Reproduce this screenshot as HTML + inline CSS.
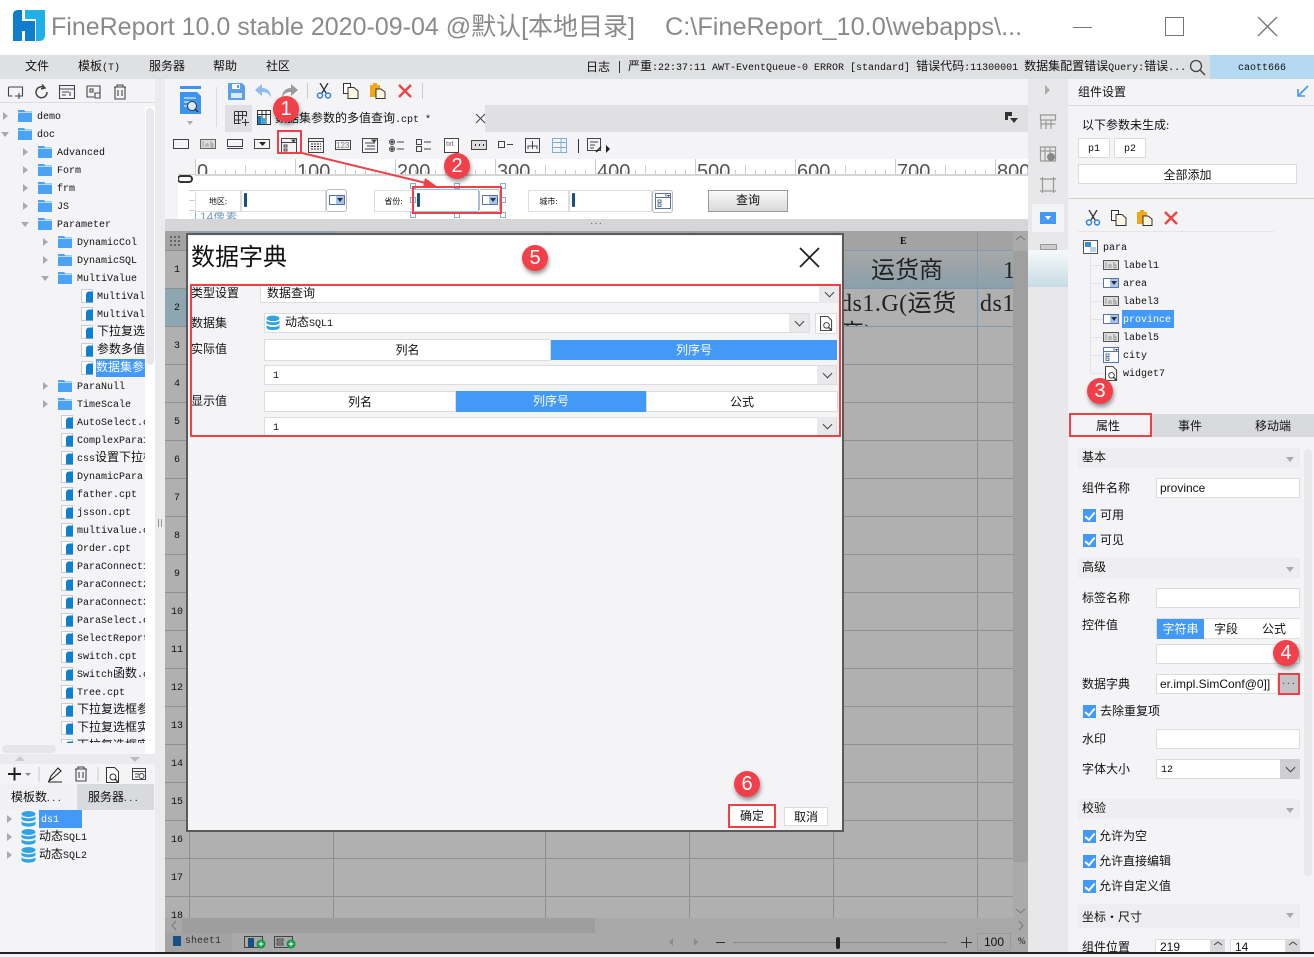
<!DOCTYPE html>
<html lang="zh"><head><meta charset="utf-8"><title>FineReport</title>
<style>
*{box-sizing:border-box}
html,body{margin:0;padding:0}
body{width:1314px;height:954px;position:relative;overflow:hidden;background:#f4f4f7;font:12px/19px "Liberation Serif","Noto Sans CJK SC",sans-serif;color:#111}
.a{position:absolute;white-space:nowrap}
.s{font-family:"Liberation Sans","Noto Sans CJK SC",sans-serif}
.m{font:10px/22px "Liberation Mono","Noto Sans CJK SC",monospace}
em{font:normal 12px/1 "Liberation Serif","Noto Sans CJK SC",sans-serif}
svg{position:absolute;overflow:visible}
.tree{position:absolute;left:0;top:107px;width:145px;height:636px;overflow:hidden;font:10px/22px "Liberation Mono","Noto Sans CJK SC",monospace}
.r{height:18px;position:relative;white-space:nowrap}
.r svg{top:2px}
.r b{font-weight:normal;position:absolute;top:0;height:18px;overflow:hidden}
.r u{position:absolute;top:5px;width:0;height:0;border-left:5px solid #aaa;border-top:4px solid transparent;border-bottom:4px solid transparent}
.r u.o{border-left:4px solid transparent;border-right:4px solid transparent;border-top:5px solid #aaa;border-bottom:0;top:7px;margin-left:-2px}
.f{position:absolute;background:#fff;border:1px solid #dcdcdc;line-height:18px;padding-left:4px;white-space:nowrap;overflow:hidden}
.ar{position:absolute;background:#e9e9ec}
.ar:after{content:"";position:absolute;left:50%;top:50%;width:6px;height:6px;margin:-5px 0 0 -3px;border-right:1.3px solid #444;border-bottom:1.3px solid #444;transform:rotate(45deg)}
.sec{position:absolute;left:1078px;width:222px;height:20px;background:#eeeef0;padding-left:4px;line-height:19px}
.sec:after{content:"";position:absolute;right:6px;top:9px;border-left:4px solid transparent;border-right:4px solid transparent;border-top:5px solid #aaa}
.ck{position:absolute;left:1083px;width:13px;height:13px;background:#4299f7}
.ck:after{content:"";position:absolute;left:4px;top:1px;width:4px;height:8px;border-right:2px solid #fff;border-bottom:2px solid #fff;transform:rotate(40deg)}
.n{position:absolute;width:26px;height:26px;border-radius:50%;background:#f2404a;color:#fff;font:20px/26px "Liberation Sans",sans-serif;text-align:center;box-shadow:1px 3px 4px rgba(0,0,0,.4);z-index:9}
.red{position:absolute;border:2px solid #ef4048;z-index:8}
.rl{position:absolute;top:159px;height:16px;width:60px;overflow:hidden;font:20px/26px "Liberation Sans",sans-serif;color:#555}
.hn{position:absolute;left:165px;width:24px;text-align:center;font:10px/22px "Liberation Mono",monospace}
.seg{position:absolute;text-align:center;line-height:20px}
</style></head><body>
<svg width="0" height="0" style="position:absolute"><defs>
<symbol id="fo" viewBox="0 0 14 14"><path d="M0 1h6l1.500 1.500H14V13H0z" fill="#4aa3f5"/><path d="M0 3.500h14" stroke="#fff" stroke-width=".6"/></symbol>
<symbol id="fi" viewBox="0 0 12 14"><path d="M.5.500h11v13H.5z" fill="#fff" stroke="#ccc"/><path d="M5 5.500a3 3 0 0 1 3-3h4v11H5z" fill="#0d80d0"/></symbol>
<symbol id="db" viewBox="0 0 15 16"><ellipse cx="7.500" cy="3" rx="7" ry="3" fill="#2fa4e4"/><path d="M.5 5c1 3 13 3 14 0v3c-1 3-13 3-14 0zM.5 10c1 3 13 3 14 0v3c-1 3.500-13 3.500-14 0z" fill="#2fa4e4"/></symbol>
<symbol id="lab" viewBox="0 0 16 10"><rect x=".5" y=".5" width="15" height="9" fill="#ddd" stroke="#555"/><path d="M3 2v6M6 8V5h2v3M11 2v6h2V5h-2" stroke="#999" fill="none"/></symbol>
<symbol id="cb" viewBox="0 0 16 10"><rect x=".5" y=".5" width="15" height="9" fill="#fff" stroke="#5a74a6"/><rect x="7" y="1" width="8" height="8" fill="#a9c4ea"/><path d="M8 3h6l-3 4z" fill="#234"/></symbol>
<symbol id="wg" viewBox="0 0 16 16"><rect x=".5" y=".5" width="15" height="15" fill="#fff" stroke="#5a74a6"/><path d="M.5 4.500h15M11 1v3.500" stroke="#5a74a6" fill="none"/><path d="M12 2h3l-1.500 2z" fill="#234"/><path d="M3 7h3v2.500H3zM3 11h3v2.500H3z" fill="none" stroke="#5a74a6"/></symbol>
<symbol id="cut" viewBox="0 0 16 16"><path d="M4 0l6 10M12 0L6 10" stroke="#333" stroke-width="1.300" fill="none"/><circle cx="4" cy="12.500" r="2.500" fill="none" stroke="#2e82d6" stroke-width="1.500"/><circle cx="12" cy="12.500" r="2.500" fill="none" stroke="#2e82d6" stroke-width="1.500"/></symbol>
<symbol id="cp" viewBox="0 0 16 16"><path d="M.5.500h7v10h-7z" fill="#fff" stroke="#333"/><path d="M5 4.500h6l4 3.500v7.500H5z" fill="#fdf6e0" stroke="#333"/></symbol>
<symbol id="pa" viewBox="0 0 16 16"><path d="M0 2h10v12H0z" fill="#f0a818"/><path d="M3 0h4v3H3z" fill="#f0a818"/><path d="M6 6h5l4 3v6.500H6z" fill="#fdf6e0" stroke="#333"/></symbol>
<symbol id="del" viewBox="0 0 14 14"><path d="M1 1l12 12M13 1L1 13" stroke="#ee4245" stroke-width="2.400"/></symbol>
<symbol id="qs" viewBox="0 0 14 16"><path d="M.5.500h8l4 4v11H.5z" fill="#fff" stroke="#333"/><circle cx="7" cy="10" r="3" fill="#fff" stroke="#333"/><path d="M9 12l3 3" stroke="#333" stroke-width="1.400"/></symbol>
</defs></svg>

<!-- title bar -->
<div class="a" style="left:0;top:0;width:1314px;height:55px;background:#fff"></div>
<svg style="left:13px;top:10px" width="32" height="32" viewBox="0 0 32 32"><path d="M0 5Q0 0 5 0H9V11H22V31H12V21H9V31H0Z" fill="#0d7dcc"/><path d="M12 0H32V25Q32 31 26 31H23V9H12Z" fill="#1fb0e8"/></svg>
<div class="a s" style="left:51px;top:10px;font-size:25px;line-height:34px;color:#8a8a8a">FineReport 10.0 stable 2020-09-04 @默认[本地目录]</div>
<div class="a s" style="left:665px;top:10px;font-size:25.300px;line-height:34px;color:#8a8a8a">C:\FineReport_10.0\webapps\...</div>
<div class="a" style="left:1073px;top:27px;width:19px;height:1px;background:#777"></div>
<div class="a" style="left:1165px;top:17px;width:19px;height:19px;border:1.500px solid #777"></div>
<svg style="left:1258px;top:17px" width="19" height="19"><path d="M0 0l19 19M19 0L0 19" stroke="#777" stroke-width="1.400"/></svg>

<!-- menu bar -->
<div class="a" style="left:0;top:55px;width:1314px;height:24px;background:#dfe0e2"></div>
<div class="a" style="left:25px;top:57px;">文件</div>
<div class="a m" style="left:78px;top:58px;"><em>模板</em>(T)</div>
<div class="a" style="left:149px;top:57px;">服务器</div>
<div class="a" style="left:213px;top:57px;">帮助</div>
<div class="a" style="left:266px;top:57px;">社区</div>
<div class="a" style="left:586px;top:58px;">日志</div>
<div class="a" style="left:619px;top:61px;width:1px;height:12px;background:#333"></div>
<div class="a m" style="left:628px;top:58px;width:558px;overflow:hidden"><em>严重</em>:22:37:11 AWT-EventQueue-0 ERROR [standard] <em>错误代码</em>:11300001 <em>数据集配置错误</em>Query:<em>错误</em>...</div>
<svg style="left:1189px;top:59px" width="17" height="17"><circle cx="7" cy="7" r="5.500" fill="none" stroke="#444" stroke-width="1.300"/><path d="M11 11l5 5" stroke="#444" stroke-width="1.500"/></svg>
<div class="a m" style="left:1210px;top:55px;width:104px;height:24px;background:#b5d9f0;text-align:center;line-height:28px">caott666</div>

<!-- left panel -->
<div class="a" style="left:0;top:79px;width:155px;height:875px;background:#f4f4f7"></div>
<div class="a" style="left:0;top:102px;width:155px;height:1px;background:#dedee0"></div>
<svg style="left:8px;top:84px" width="125" height="16" fill="none" stroke="#444" stroke-width="1.100"><path d="M.5 3h14v9H7M.5 3v9h4M11 9v6M8 12h6"/><path d="M37 4a5.500 5.500 0 1 0 2 4M34 .5l3 3.500-4 1" stroke-width="1.500"/><path d="M51.500 1.500h15v13h-15zM51.500 5h15M54 8h7M54 11h4M62 8v4"/><path d="M79 2h13v7M79 2v11h7M82 5h3v3h-3zM87 9h5v5h-5z"/><path d="M106 3h12M109 3V1h6v2M107 3v12h10V3M110 6v6M114 6v6"/></svg>
<div class="a" style="left:156px;top:85px;width:0;height:0;border-right:5px solid #bbb;border-top:5px solid transparent;border-bottom:5px solid transparent"></div>
<div class="a" style="left:145px;top:107px;width:10px;height:647px;background:#fff"></div>
<div class="a" style="left:146px;top:108px;width:8px;height:257px;border-radius:4px;background:#e9e9eb"></div>
<div class="a" style="left:155px;top:79px;width:10px;height:875px;background:#ebebed"></div>
<div class="a" style="left:158px;top:519px;width:4px;height:8px;border-left:1px solid #999;border-right:1px solid #999"></div>

<div class="tree">
<div class="r"><u style="left:3px"></u><svg style="left:18px" width="14" height="14"><use href="#fo"/></svg><b style="left:37px">demo</b></div>
<div class="r"><u class="o" style="left:3px"></u><svg style="left:18px" width="14" height="14"><use href="#fo"/></svg><b style="left:37px">doc</b></div>
<div class="r"><u style="left:23px"></u><svg style="left:38px" width="14" height="14"><use href="#fo"/></svg><b style="left:57px">Advanced</b></div>
<div class="r"><u style="left:23px"></u><svg style="left:38px" width="14" height="14"><use href="#fo"/></svg><b style="left:57px">Form</b></div>
<div class="r"><u style="left:23px"></u><svg style="left:38px" width="14" height="14"><use href="#fo"/></svg><b style="left:57px">frm</b></div>
<div class="r"><u style="left:23px"></u><svg style="left:38px" width="14" height="14"><use href="#fo"/></svg><b style="left:57px">JS</b></div>
<div class="r"><u class="o" style="left:23px"></u><svg style="left:38px" width="14" height="14"><use href="#fo"/></svg><b style="left:57px">Parameter</b></div>
<div class="r"><u style="left:43px"></u><svg style="left:58px" width="14" height="14"><use href="#fo"/></svg><b style="left:77px">DynamicCol</b></div>
<div class="r"><u style="left:43px"></u><svg style="left:58px" width="14" height="14"><use href="#fo"/></svg><b style="left:77px">DynamicSQL</b></div>
<div class="r"><u class="o" style="left:43px"></u><svg style="left:58px" width="14" height="14"><use href="#fo"/></svg><b style="left:77px">MultiValue</b></div>
<div class="r"><svg style="left:81px" width="12" height="14"><use href="#fi"/></svg><b style="left:97px">MultiValue1</b></div>
<div class="r"><svg style="left:81px" width="12" height="14"><use href="#fi"/></svg><b style="left:97px">MultiValue2</b></div>
<div class="r"><svg style="left:81px" width="12" height="14"><use href="#fi"/></svg><b style="left:97px"><em>下拉复选框</em></b></div>
<div class="r"><svg style="left:81px" width="12" height="14"><use href="#fi"/></svg><b style="left:97px"><em>参数多值查</em></b></div>
<div class="r"><svg style="left:81px" width="12" height="14"><use href="#fi"/></svg><b style="left:96px;width:49px;background:#4299f7;color:#fff;overflow:hidden"><em>数据集参数</em></b></div>
<div class="r"><u style="left:43px"></u><svg style="left:58px" width="14" height="14"><use href="#fo"/></svg><b style="left:77px">ParaNull</b></div>
<div class="r"><u style="left:43px"></u><svg style="left:58px" width="14" height="14"><use href="#fo"/></svg><b style="left:77px">TimeScale</b></div>
<div class="r"><svg style="left:61px" width="12" height="14"><use href="#fi"/></svg><b style="left:77px">AutoSelect.cpt</b></div>
<div class="r"><svg style="left:61px" width="12" height="14"><use href="#fi"/></svg><b style="left:77px">ComplexPara1.cpt</b></div>
<div class="r"><svg style="left:61px" width="12" height="14"><use href="#fi"/></svg><b style="left:77px">css<em>设置下拉框</em></b></div>
<div class="r"><svg style="left:61px" width="12" height="14"><use href="#fi"/></svg><b style="left:77px">DynamicPara.cpt</b></div>
<div class="r"><svg style="left:61px" width="12" height="14"><use href="#fi"/></svg><b style="left:77px">father.cpt</b></div>
<div class="r"><svg style="left:61px" width="12" height="14"><use href="#fi"/></svg><b style="left:77px">jsson.cpt</b></div>
<div class="r"><svg style="left:61px" width="12" height="14"><use href="#fi"/></svg><b style="left:77px">multivalue.cpt</b></div>
<div class="r"><svg style="left:61px" width="12" height="14"><use href="#fi"/></svg><b style="left:77px">Order.cpt</b></div>
<div class="r"><svg style="left:61px" width="12" height="14"><use href="#fi"/></svg><b style="left:77px">ParaConnect1.cpt</b></div>
<div class="r"><svg style="left:61px" width="12" height="14"><use href="#fi"/></svg><b style="left:77px">ParaConnect2.cpt</b></div>
<div class="r"><svg style="left:61px" width="12" height="14"><use href="#fi"/></svg><b style="left:77px">ParaConnect3.cpt</b></div>
<div class="r"><svg style="left:61px" width="12" height="14"><use href="#fi"/></svg><b style="left:77px">ParaSelect.cpt</b></div>
<div class="r"><svg style="left:61px" width="12" height="14"><use href="#fi"/></svg><b style="left:77px">SelectReport.cpt</b></div>
<div class="r"><svg style="left:61px" width="12" height="14"><use href="#fi"/></svg><b style="left:77px">switch.cpt</b></div>
<div class="r"><svg style="left:61px" width="12" height="14"><use href="#fi"/></svg><b style="left:77px">Switch<em>函数</em>.cpt</b></div>
<div class="r"><svg style="left:61px" width="12" height="14"><use href="#fi"/></svg><b style="left:77px">Tree.cpt</b></div>
<div class="r"><svg style="left:61px" width="12" height="14"><use href="#fi"/></svg><b style="left:77px"><em>下拉复选框参数</em></b></div>
<div class="r"><svg style="left:61px" width="12" height="14"><use href="#fi"/></svg><b style="left:77px"><em>下拉复选框实际</em></b></div>
<div class="r"><svg style="left:61px" width="12" height="14"><use href="#fi"/></svg><b style="left:77px"><em>下拉复选框实</em></b></div>
</div>
<div class="a" style="left:2px;top:745px;width:54px;height:8px;border-radius:4px;background:#e6e6e8"></div>
<div class="a" style="left:0;top:754px;width:155px;height:10px;background:#ebebed"></div>
<div class="a" style="left:15px;top:756px;border-left:5px solid transparent;border-right:5px solid transparent;border-bottom:5px solid #ccc"></div>
<div class="a" style="left:130px;top:757px;border-left:5px solid transparent;border-right:5px solid transparent;border-top:5px solid #bbb"></div>
<svg style="left:8px;top:766px" width="140" height="17" fill="none" stroke="#444" stroke-width="1.100"><path d="M0 8h13M6.500 1.500v13" stroke="#222" stroke-width="2"/><path d="M17 7h6l-3 3z" fill="#888" stroke="none"/><path d="M31 1v15M90 1v15" stroke="#ccc"/><path d="M41 15l2-5 7-8 3 3-8 7zM40 16h14" stroke="#222"/><path d="M67 3h12M70 3V1h6v2M68 3v12h10V3M71 6v6M75 6v6"/></svg>
<svg style="left:106px;top:767px" width="14" height="16"><use href="#qs"/></svg>
<svg style="left:132px;top:767px" width="14" height="14" fill="none" stroke="#444"><path d="M.5 1.500h13v11H.5zM.5 4.500h13M3 7h4M3 10h3"/><circle cx="9.500" cy="9" r="2.500"/></svg>
<div class="a" style="left:0;top:784px;width:77px;height:26px;background:#f1f1f3;line-height:26px;padding-left:11px">模板数<span style="font-size:10px;letter-spacing:3px">...</span></div>
<div class="a" style="left:77px;top:784px;width:77px;height:26px;background:#d9dade;line-height:26px;padding-left:11px">服务器<span style="font-size:10px;letter-spacing:3px">...</span></div>
<div class="a" style="left:7px;top:815px;border-left:5px solid #aaa;border-top:4px solid transparent;border-bottom:4px solid transparent"></div>
<div class="a" style="left:7px;top:833px;border-left:5px solid #aaa;border-top:4px solid transparent;border-bottom:4px solid transparent"></div>
<div class="a" style="left:7px;top:851px;border-left:5px solid #aaa;border-top:4px solid transparent;border-bottom:4px solid transparent"></div>
<svg style="left:21px;top:811px" width="15" height="16"><use href="#db"/></svg>
<svg style="left:21px;top:829px" width="15" height="16"><use href="#db"/></svg>
<svg style="left:21px;top:847px" width="15" height="16"><use href="#db"/></svg>
<div class="a m" style="left:39px;top:810px;width:43px;height:18px;background:#4299f7;color:#fff;padding-left:2px">ds1</div>
<div class="a m" style="left:39px;top:828px"><em>动态</em>SQL1</div>
<div class="a m" style="left:39px;top:846px"><em>动态</em>SQL2</div>

<!-- center top -->
<div class="a" style="left:165px;top:79px;width:863px;height:80px;background:#f4f4f7"></div>
<svg style="left:180px;top:86px" width="21" height="28"><rect x="0" y="0" width="21" height="3" fill="#3a94f0"/><path d="M0 6h17l4 4v18H0z" fill="#3a94f0"/><path d="M4 12h12M4 16h6M4 20h5" stroke="#fff"/><circle cx="12" cy="20" r="4.500" fill="#dbeafb" stroke="#334"/><path d="M15 23l3 3" stroke="#333" stroke-width="1.500"/></svg>
<div class="a" style="left:187px;top:121px;border-left:3px solid transparent;border-right:3px solid transparent;border-top:4px solid #aaa"></div>
<div class="a" style="left:216px;top:87px;width:1px;height:40px;background:#ddd"></div>
<svg style="left:228px;top:83px" width="17" height="17"><path d="M1 0h13l3 3v13a1 1 0 0 1-1 1H1a1 1 0 0 1-1-1V1a1 1 0 0 1 1-1z" fill="#5a9fe8"/><rect x="4" y="1" width="8" height="5" fill="#fff"/><rect x="9" y="2" width="2" height="3" fill="#5a9fe8"/><rect x="3" y="10" width="11" height="5" fill="#dbeafb"/></svg>
<svg style="left:255px;top:84px" width="17" height="15"><path d="M7 0L0 6l7 6V8c4 0 7 1 9 6 0-6-3-10-9-10z" fill="#8dbdf0"/></svg>
<svg style="left:281px;top:84px" width="17" height="15"><path d="M10 0l7 6-7 6V8C6 8 3 9 1 14c0-6 3-10 9-10z" fill="#9a9a9a"/></svg>
<div class="a" style="left:307px;top:83px;width:1px;height:16px;background:#ccc"></div>
<svg style="left:316px;top:83px" width="16" height="16"><use href="#cut"/></svg>
<svg style="left:343px;top:83px" width="16" height="16"><use href="#cp"/></svg>
<svg style="left:370px;top:83px" width="16" height="16"><use href="#pa"/></svg>
<svg style="left:398px;top:84px" width="14" height="14"><use href="#del"/></svg>
<div class="a" style="left:422px;top:83px;width:1px;height:16px;background:#ccc"></div>

<div class="a" style="left:225px;top:105px;width:803px;height:27px;background:#e0e0e2"></div>
<div class="a" style="left:252px;top:105px;width:233px;height:27px;background:#f4f4f7"></div>
<svg style="left:234px;top:111px" width="15" height="15" fill="none" stroke="#333"><path d="M.5.500h12M.5 4.500h12M.5 9h7M.5.500v12h6M4.500.500v12M8.500.500v8M12.500.500v5M11.500 8v7M8 11.500h7"/></svg>
<svg style="left:257px;top:110px" width="14" height="15"><path d="M.5.500h13v14H.5zM.5 4.500h13M5 .500v14M9 .500v14" fill="#fff" stroke="#333"/><rect x="1" y="6" width="3" height="8" fill="#0d80d0"/><rect x="5" y="8" width="3" height="6" fill="#1fb0e8"/></svg>
<div class="a m" style="left:275px;top:110px"><em>数据集参数的多值查询</em>.cpt *</div>
<svg style="left:476px;top:114px" width="9" height="9"><path d="M0 0l9 9M9 0L0 9" stroke="#444"/></svg>
<svg style="left:1005px;top:112px" width="13" height="11"><path d="M0 0h7v4H3v4H0z" fill="#333"/><path d="M5 6h8l-4 5z" fill="#333"/></svg>

<!-- widget row -->
<svg style="left:173px;top:138px" width="440" height="16" fill="none" stroke="#444">
<rect x=".5" y="1.500" width="15" height="9" />
<g transform="translate(27 1)"><rect x=".5" y=".5" width="15" height="9" fill="#ddd" stroke="#666"/><path d="M3 2v6M6 8V5h2v3M11 2v6h2V5h-2" stroke="#999"/></g>
<rect x="54.500" y="1.500" width="15" height="7"/><path d="M54 10.500h16"/>
<rect x="81.500" y="1.500" width="15" height="9"/><path d="M86 4h7l-3.500 4z" fill="#222" stroke="none"/>
<g transform="translate(108 0)"><path d="M.5.500h15v14H.5zM.5 4.500h15"/><path d="M11 2h3l-1.500 2z" fill="#222"/><path d="M3 7h3v2H3zM3 11h3v2H3z"/></g>
<g transform="translate(135 0)"><path d="M.5.500h15v14H.5zM.5 3.500h15"/><path d="M3 6h10M3 8.500h10M3 11h10" stroke-dasharray="2 1" stroke="#222"/></g>
<g transform="translate(162 2)"><rect x=".5" y=".5" width="15" height="9"/><text x="1" y="8" font-size="8" font-family="Liberation Sans" fill="#777" stroke="none">123</text></g>
<g transform="translate(189 0)"><path d="M.5.500h15v14H.5zM3 5h10M5 8h8M3 11h10"/><path d="M10 2h4l-2 2z" fill="#222"/></g>
<g transform="translate(216 1)"><circle cx="3" cy="3" r="2.500"/><circle cx="3" cy="3" r="1" fill="#333"/><circle cx="3" cy="10" r="2.500"/><circle cx="3" cy="10" r="1" fill="#333"/><path d="M8 3h7M8 10h7"/></g>
<g transform="translate(243 1)"><path d="M.5.500h5v5h-5zM.5 7.500h5v5h-5zM8 3h7M8 10h7"/></g>
<g transform="translate(271 0)"><rect x=".5" y=".5" width="14" height="14" fill="#fff"/><text x="2" y="8" font-size="7" font-family="Liberation Sans" fill="#555" stroke="none">txt</text></g>
<g transform="translate(298 2)"><rect x=".5" y=".5" width="15" height="9" fill="#ddd"/><path d="M4 5h1M8 5h1M12 5h1" stroke="#222" stroke-width="2"/></g>
<g transform="translate(325 1)"><path d="M.5 2.500h6v6h-6zM9 5.500h6"/></g>
<g transform="translate(352 0)"><rect x=".5" y=".5" width="14" height="14"/><path d="M7.500 3v3M3 11V8h9v3M7.500 6v5" /></g>
<g transform="translate(379 0)" stroke="#7ab0dc"><path d="M.5.500h14v14H.5zM.5 4.500h14M9 .5v14M.5 9.500h14"/></g>
<path d="M405.500 1v14" stroke="#333"/>
<g transform="translate(414 0)"><path d="M.5.500h13v12H.5zM3 4h8M3 7h5M3 10h4"/><path d="M9 14l5-5" stroke="#222" stroke-width="1.500"/></g>
<path d="M433 7l4 4-4 4z" fill="#222" stroke="none"/>
</svg>

<!-- ruler -->
<div class="a" style="left:195px;top:159px;width:833px;height:16px;background:#fff"></div>
<svg style="left:195px;top:159px" width="833" height="17"><g stroke="#ccc"><path d="M.5 0v16M100.500 0v16M200.500 0v16M300.500 0v16M400.500 0v16M500.500 0v16M600.500 0v16M700.500 0v16M800.500 0v16M50.500 6v10M150.500 6v10M250.500 6v10M350.500 6v10M450.500 6v10M550.500 6v10M650.500 6v10M750.500 6v10M10.500 11v5M20.500 11v5M30.500 11v5M40.500 11v5M60.500 11v5M70.500 11v5M80.500 11v5M90.500 11v5M110.500 11v5M120.500 11v5M130.500 11v5M140.500 11v5M160.500 11v5M170.500 11v5M180.500 11v5M190.500 11v5M210.500 11v5M220.500 11v5M230.500 11v5M240.500 11v5M260.500 11v5M270.500 11v5M280.500 11v5M290.500 11v5M310.500 11v5M320.500 11v5M330.500 11v5M340.500 11v5M360.500 11v5M370.500 11v5M380.500 11v5M390.500 11v5M410.500 11v5M420.500 11v5M430.500 11v5M440.500 11v5M460.500 11v5M470.500 11v5M480.500 11v5M490.500 11v5M510.500 11v5M520.500 11v5M530.500 11v5M540.500 11v5M560.500 11v5M570.500 11v5M580.500 11v5M590.500 11v5M610.500 11v5M620.500 11v5M630.500 11v5M640.500 11v5M660.500 11v5M670.500 11v5M680.500 11v5M690.500 11v5M710.500 11v5M720.500 11v5M730.500 11v5M740.500 11v5M760.500 11v5M770.500 11v5M780.500 11v5M790.500 11v5M810.500 11v5M820.500 11v5"/></g></svg>
<div class="rl" style="left:197px;overflow:hidden">0</div><div class="rl" style="left:297px">100</div><div class="rl" style="left:397px">200</div><div class="rl" style="left:497px">300</div><div class="rl" style="left:597px">400</div><div class="rl" style="left:697px">500</div><div class="rl" style="left:797px">600</div><div class="rl" style="left:897px">700</div><div class="rl" style="left:997px;width:31px">800</div>
<div class="a" style="left:195px;top:174px;width:833px;height:2px;background:#d6d6d8"></div>
<div class="a" style="left:178px;top:175px;width:17px;height:44px;background:#fff"></div>
<div class="a" style="left:178px;top:174px;width:17px;height:1px;background:#ccc"></div>
<div class="a" style="left:177px;top:175px;width:16px;height:8px;border:2px solid #333;border-radius:4px"></div>
<div class="a" style="left:189px;top:190px;width:6px;height:1px;background:#ccc;box-shadow:0 10px 0 #ccc,0 20px 0 #ccc"></div>

<!-- parameter pane -->
<div class="a" style="left:195px;top:176px;width:833px;height:43px;background:#fff"></div>
<div class="a" style="left:195px;top:190px;width:46px;height:22px;border:1px solid #ddd;text-align:center;font-size:8px;line-height:22px">地区:</div>
<div class="a" style="left:241px;top:190px;width:85px;height:22px;border:1px solid #ddd;background:#fff"></div>
<div class="a" style="left:244px;top:193px;width:3px;height:14px;background:#174f86;border-radius:1px"></div>
<div class="a" style="left:326px;top:189px;width:21px;height:23px;border:1px solid #bbb;border-radius:3px"></div>
<svg style="left:329px;top:195px" width="16" height="10"><use href="#cb"/></svg>
<div class="a" style="left:374px;top:190px;width:39px;height:22px;border:1px solid #ddd;text-align:center;font-size:8px;line-height:22px">省份:</div>
<div class="a" style="left:413px;top:189px;width:66px;height:23px;border:1px solid #8fc0ef"></div>
<div class="a" style="left:417px;top:193px;width:3px;height:14px;background:#174f86;border-radius:1px"></div>
<div class="a" style="left:479px;top:189px;width:21px;height:23px;border:1px solid #bbb;border-radius:3px"></div>
<svg style="left:482px;top:195px" width="16" height="10"><use href="#cb"/></svg>
<svg style="left:410px;top:183px" width="96" height="36" fill="#fff" stroke="#8caecf"><rect x=".5" y=".5" width="5" height="5"/><rect x="44.500" y=".5" width="5" height="5"/><rect x="90.500" y=".5" width="5" height="5"/><rect x=".5" y="14.500" width="5" height="5"/><rect x="90.500" y="14.500" width="5" height="5"/><rect x=".5" y="29.500" width="5" height="5"/><rect x="44.500" y="29.500" width="5" height="5"/><rect x="90.500" y="29.500" width="5" height="5"/></svg>
<div class="a" style="left:528px;top:190px;width:41px;height:22px;border:1px solid #ddd;text-align:center;font-size:8px;line-height:22px">城市:</div>
<div class="a" style="left:569px;top:190px;width:83px;height:22px;border:1px solid #ddd"></div>
<div class="a" style="left:572px;top:193px;width:3px;height:14px;background:#174f86;border-radius:1px"></div>
<div class="a" style="left:652px;top:190px;width:21px;height:23px;border:1px solid #bbb;border-radius:3px"></div>
<svg style="left:655px;top:193px" width="16" height="16"><use href="#wg"/></svg>
<div class="a" style="left:708px;top:190px;width:80px;height:22px;border:1px solid #999;background:linear-gradient(#fafafa,#d8d8d8);text-align:center;line-height:19px">查询</div>
<div class="a" style="left:195px;top:212px;width:60px;height:7px;overflow:hidden;font-size:12px;line-height:11px;color:#7a9ec0;border-left:1px solid #9ab;padding-left:4px;font-family:'Liberation Sans','Noto Sans CJK SC',sans-serif">14像素</div>
<div class="a" style="left:165px;top:219px;width:863px;height:12px;background:#d6d6d8;text-align:center;line-height:12px;letter-spacing:1px;font-size:10px;color:#666">···</div>
<div class="a" style="left:165px;top:159px;width:13px;height:60px;background:#f4f4f7"></div>

<!-- grid -->
<svg style="left:165px;top:231px" width="848" height="687">
<rect width="848" height="687" fill="#b0b0b0"/>
<rect width="848" height="19" fill="#a3a3a3"/>
<rect x="24" width="144" height="3" fill="#8fa5ae"/>
<rect y="57" width="24" height="38" fill="#8ea6b0"/>
<defs><linearGradient id="gh" x1="0" y1="0" x2="0" y2="1"><stop offset="0" stop-color="#a8a8a8"/><stop offset="1" stop-color="#8aa0aa"/></linearGradient></defs>
<rect x="668" y="19" width="180" height="38" fill="url(#gh)"/>
<g stroke="#8f8f8f"><path d="M0 19.500h848M0 57.500h848M0 95.500h848M0 133.500h848M0 171.500h848M0 209.500h848M0 247.500h848M0 285.500h848M0 323.500h848M0 361.500h848M0 399.500h848M0 437.500h848M0 475.500h848M0 513.500h848M0 551.500h848M0 589.500h848M0 627.500h848M0 665.500h848M24.500 0v687M168.500 0v687M380.500 0v687M524.500 0v687M668.500 0v687M812.500 0v687"/></g>
<path d="M668.500 19v76M812.500 19v76M668 19.500h180M668 57.500h180M668 95.500h180" stroke="#7f9ab0"/>
</svg>
<svg style="left:170px;top:236px" width="11" height="11" fill="#666"><path d="M0 0h2v2H0zM4 0h2v2H4zM8 0h2v2H8zM0 4h2v2H0zM4 4h2v2H4zM8 4h2v2H8zM0 8h2v2H0zM4 8h2v2H4zM8 8h2v2H8z"/></svg>
<div class="hn" style="top:260px">1</div><div class="hn" style="top:298px">2</div><div class="hn" style="top:336px">3</div><div class="hn" style="top:374px">4</div><div class="hn" style="top:412px">5</div><div class="hn" style="top:450px">6</div><div class="hn" style="top:488px">7</div><div class="hn" style="top:526px">8</div><div class="hn" style="top:564px">9</div><div class="hn" style="top:602px">10</div><div class="hn" style="top:640px">11</div><div class="hn" style="top:678px">12</div><div class="hn" style="top:716px">13</div><div class="hn" style="top:754px">14</div><div class="hn" style="top:792px">15</div><div class="hn" style="top:830px">16</div><div class="hn" style="top:868px">17</div>
<div class="hn" style="top:906px;height:12px;overflow:hidden">18</div>
<div class="a" style="left:900px;top:233px;font-weight:bold;font-size:10px;line-height:18px">E</div>
<div class="a" style="left:871px;top:254px;font-size:24px;line-height:34px;color:#222">运货商</div>
<div class="a" style="left:1003px;top:254px;width:10px;height:34px;overflow:hidden;font-size:24px;line-height:34px;color:#222">1</div>
<div class="a" style="left:840px;top:289px;width:130px;height:37px;overflow:hidden;font-size:24px;line-height:30px;color:#222;letter-spacing:.5px">ds1.G(运货<br>商)</div>
<div class="a" style="left:980px;top:289px;width:33px;height:37px;overflow:hidden;font-size:24px;line-height:30px;color:#222;letter-spacing:.5px">ds1</div>

<!-- scrollbars -->
<div class="a" style="left:1013px;top:231px;width:15px;height:687px;background:#aaa"></div>
<div class="a" style="left:1013px;top:251px;width:15px;height:611px;background:#9f9f9f"></div>
<svg style="left:1016px;top:235px" width="9" height="6"><path d="M0 5l4.500-4L9 5" fill="none" stroke="#777"/></svg>
<svg style="left:1016px;top:908px" width="9" height="6"><path d="M0 1l4.500 4L9 1" fill="none" stroke="#777"/></svg>
<div class="a" style="left:165px;top:918px;width:863px;height:15px;background:#a8a8a8"></div>
<div class="a" style="left:182px;top:918px;width:413px;height:15px;background:#9e9e9e"></div>
<svg style="left:171px;top:921px" width="6" height="9"><path d="M5 0L1 4.500 5 9" fill="none" stroke="#777"/></svg>
<svg style="left:1018px;top:921px" width="6" height="9"><path d="M1 0l4 4.500L1 9" fill="none" stroke="#777"/></svg>

<!-- sheet bar -->
<div class="a" style="left:165px;top:933px;width:863px;height:19px;background:#a9a9a9"></div>
<div class="a" style="left:165px;top:933px;width:67px;height:19px;background:#a3a3a3"></div>
<div class="a" style="left:173px;top:936px;width:8px;height:10px;background:#174f86"></div>
<div class="a m" style="left:185px;top:931px;color:#333">sheet1</div>
<svg style="left:244px;top:935px" width="56" height="14" fill="none" stroke="#444"><rect x=".5" y="1.500" width="18" height="11"/><rect x="4" y="3" width="6" height="9" fill="#174f86" stroke="none"/><circle cx="17" cy="9" r="4.500" fill="#129a46" stroke="none"/><path d="M14.500 9h5M17 6.500v5" stroke="#fff"/><rect x="30.500" y="1.500" width="18" height="11"/><path d="M33 4h6v2h-6zM33 8h6v2h-6z"/><circle cx="47" cy="9" r="4.500" fill="#129a46" stroke="none"/><path d="M44.500 9h5M47 6.500v5" stroke="#fff"/></svg>
<div class="a" style="left:669px;top:938px;border-right:4px solid #8a8a8a;border-top:4px solid transparent;border-bottom:4px solid transparent"></div>
<div class="a" style="left:694px;top:938px;border-left:4px solid #8a8a8a;border-top:4px solid transparent;border-bottom:4px solid transparent"></div>
<div class="a" style="left:716px;top:942px;width:9px;height:1px;background:#333"></div>
<div class="a" style="left:733px;top:942px;width:214px;height:1px;background:#8a8a8a"></div>
<div class="a" style="left:836px;top:937px;width:4px;height:12px;background:#222;border-radius:2px"></div>
<svg style="left:961px;top:937px" width="11" height="11"><path d="M0 5.500h11M5.500 0v11" stroke="#333"/></svg>
<div class="a s" style="left:977px;top:933px;width:34px;height:18px;border:1px solid #999;text-align:center;line-height:17px">100</div>
<div class="a" style="left:1018px;top:932px;font-size:9px">%</div>

<!-- dialog -->
<div class="a" style="left:186px;top:233px;width:658px;height:599px;border:2.500px solid #5a5a5a;background:#f4f4f7"></div>
<div class="a" style="left:189px;top:236px;width:652px;height:47px;background:#fff"></div>
<div class="a s" style="left:191px;top:240px;font-size:24px;line-height:36px;color:#111">数据字典</div>
<svg style="left:800px;top:248px" width="19" height="19"><path d="M0 0l19 19M19 0L0 19" stroke="#222" stroke-width="1.800"/></svg>

<div class="a" style="left:191px;top:284px">类型设置</div>
<div class="f" style="left:260px;top:284px;width:578px;height:19px;border-top:0;padding-left:6px;line-height:19px">数据查询</div><div class="ar" style="left:819px;top:284px;width:19px;height:19px"></div>
<div class="a" style="left:191px;top:314px">数据集</div>
<div class="f m" style="left:264px;top:313px;width:546px;height:20px;padding-left:20px;line-height:22px"><em>动态</em>SQL1</div>
<svg style="left:266px;top:315px" width="14" height="16"><use href="#db"/></svg>
<div class="ar" style="left:789px;top:314px;width:20px;height:18px"></div>
<div class="f" style="left:815px;top:313px;width:22px;height:21px"></div>
<svg style="left:820px;top:316px" width="13" height="15"><use href="#qs"/></svg>
<div class="a" style="left:191px;top:340px">实际值</div>
<div class="seg" style="left:264px;top:339px;width:287px;height:22px;background:#fff;border:1px solid #dcdcdc">列名</div>
<div class="seg" style="left:551px;top:340px;width:286px;height:20px;background:#4299f7;color:#fff;line-height:20px">列序号</div>
<div class="f m" style="left:264px;top:365px;width:573px;height:20px;padding-left:8px;line-height:22px">1</div><div class="ar" style="left:817px;top:366px;width:19px;height:18px"></div>
<div class="a" style="left:191px;top:392px">显示值</div>
<div class="seg" style="left:264px;top:391px;width:192px;height:21px;background:#fff;border:1px solid #dcdcdc">列名</div>
<div class="seg" style="left:456px;top:391px;width:190px;height:21px;background:#4299f7;color:#fff">列序号</div>
<div class="seg" style="left:646px;top:391px;width:192px;height:21px;background:#fff;border:1px solid #dcdcdc">公式</div>
<div class="f m" style="left:264px;top:417px;width:573px;height:19px;padding-left:8px;line-height:22px">1</div><div class="ar" style="left:817px;top:417px;width:19px;height:18px"></div>
<div class="red" style="left:190px;top:284px;width:651px;height:153px"></div>
<div class="f" style="left:730px;top:806px;width:44px;height:21px;padding:0;text-align:center;border:0;line-height:21px">确定</div>
<div class="red" style="left:728px;top:804px;width:48px;height:24px"></div>
<div class="f" style="left:784px;top:807px;width:44px;height:19px;padding:0;text-align:center;line-height:18px">取消</div>

<!-- right strip -->
<div class="a" style="left:1028px;top:79px;width:40px;height:875px;background:#e8e8ea"></div>
<div class="a" style="left:1045px;top:85px;border-left:5px solid #aaa;border-top:5px solid transparent;border-bottom:5px solid transparent"></div>
<svg style="left:1040px;top:114px" width="16" height="80" fill="none" stroke="#999" stroke-width="1.200"><path d="M.5 1h15v5h-15zM1 6v9M6 6v9M11 6v9M.5 10h15"/><path d="M.5 33h15v14H.5zM.5 37h15M5 33v14M10 33v6"/><circle cx="11" cy="43" r="4" fill="#888" stroke="none"/><path d="M2.500 65h11v12h-11zM0 65h16M0 77h16M2.500 63v16M13.500 63v16"/></svg>
<div class="a" style="left:1032px;top:204px;width:32px;height:28px;background:#f4f4f7"></div>
<div class="a" style="left:1040px;top:212px;width:16px;height:12px;background:#4299f7"></div>
<div class="a" style="left:1045px;top:216px;border-left:3px solid transparent;border-right:3px solid transparent;border-top:4px solid #fff"></div>
<div class="a" style="left:1040px;top:244px;width:17px;height:6px;border:1px solid #999;background:#ccc"></div>
<div class="a" style="left:1028px;top:250px;width:40px;height:37px;background:linear-gradient(#f6f9fb,#c6dde4)"></div>

<!-- right panel -->
<div class="a" style="left:1068px;top:79px;width:246px;height:875px;background:#f4f4f7"></div>
<div class="a" style="left:1078px;top:83px">组件设置</div>
<svg style="left:1297px;top:85px" width="12" height="12"><path d="M11 1L2 10M1 4v7h7" fill="none" stroke="#4299f7" stroke-width="1.600"/></svg>
<div class="a" style="left:1068px;top:105px;width:246px;height:1px;background:#dcdcdc"></div>
<div class="a" style="left:1082px;top:116px">以下参数未生成:</div>
<div class="f m" style="left:1078px;top:138px;width:32px;height:20px;padding:0;text-align:center;line-height:22px">p1</div>
<div class="f m" style="left:1114px;top:138px;width:32px;height:20px;padding:0;text-align:center;line-height:22px">p2</div>
<div class="f" style="left:1078px;top:164px;width:219px;height:20px;padding:0;text-align:center;line-height:20px">全部添加</div>
<div class="a" style="left:1068px;top:198px;width:246px;height:1px;background:#d5d0c8"></div>
<svg style="left:1085px;top:210px" width="16" height="16"><use href="#cut"/></svg>
<svg style="left:1111px;top:210px" width="16" height="16"><use href="#cp"/></svg>
<svg style="left:1137px;top:210px" width="16" height="16"><use href="#pa"/></svg>
<svg style="left:1164px;top:211px" width="14" height="14"><use href="#del"/></svg>
<div class="a" style="left:1078px;top:231px;width:196px;height:1px;background:#e6e6e8"></div>
<svg style="left:1083px;top:240px" width="15" height="14"><rect x=".5" y=".5" width="14" height="13" fill="#fff" stroke="#555"/><rect x="2" y="2" width="6" height="5" fill="#3d8fd0"/><rect x="7" y="7" width="6" height="5" fill="#b5d0f0"/></svg>
<svg style="left:1090px;top:254px" width="14" height="120"><path d="M.5 0v119M0 11.500h13M0 29.500h13M0 47.500h13M0 65.500h13M0 83.500h13M0 101.500h13M0 119.500h13" stroke="#e4e4e6" fill="none"/></svg>
<svg style="left:1103px;top:260px" width="16" height="10"><use href="#lab"/></svg>
<svg style="left:1103px;top:278px" width="16" height="10"><use href="#cb"/></svg>
<svg style="left:1103px;top:296px" width="16" height="10"><use href="#lab"/></svg>
<svg style="left:1103px;top:314px" width="16" height="10"><use href="#cb"/></svg>
<svg style="left:1103px;top:332px" width="16" height="10"><use href="#lab"/></svg>
<svg style="left:1103px;top:347px" width="16" height="16"><use href="#wg"/></svg>
<svg style="left:1105px;top:366px" width="13" height="15"><use href="#qs"/></svg>
<div class="a m" style="left:1103px;top:238px">para</div>
<div class="a m" style="left:1123px;top:256px">label1</div>
<div class="a m" style="left:1123px;top:274px">area</div>
<div class="a m" style="left:1123px;top:292px">label3</div>
<div class="a m" style="left:1122px;top:310px;width:52px;height:18px;background:#4299f7;color:#fff;padding-left:1px">province</div>
<div class="a m" style="left:1123px;top:328px">label5</div>
<div class="a m" style="left:1123px;top:346px">city</div>
<div class="a m" style="left:1123px;top:364px">widget7</div>

<div class="a" style="left:1152px;top:414px;width:162px;height:23px;background:#d9dade"></div>
<div class="a" style="left:1096px;top:417px">属性</div>
<div class="a" style="left:1178px;top:417px">事件</div>
<div class="a" style="left:1255px;top:417px">移动端</div>
<div class="red" style="left:1069px;top:413px;width:83px;height:24px"></div>

<div class="a" style="left:1304px;top:449px;width:8px;height:427px;border-radius:4px;background:#e9e9eb"></div>
<div class="sec" style="top:448px">基本</div>
<div class="a" style="left:1082px;top:479px">组件名称</div>
<div class="f s" style="left:1156px;top:478px;width:144px;height:20px;padding-left:3px">province</div>
<div class="ck" style="top:509px"></div><div class="a" style="left:1100px;top:506px">可用</div>
<div class="ck" style="top:534px"></div><div class="a" style="left:1100px;top:531px">可见</div>
<div class="sec" style="top:558px">高级</div>
<div class="a" style="left:1082px;top:589px">标签名称</div>
<div class="f" style="left:1156px;top:588px;width:144px;height:20px"></div>
<div class="a" style="left:1082px;top:616px">控件值</div>
<div class="a" style="left:1156px;top:618px;width:144px;height:21px;background:#fff;border:1px solid #e0e0e0;border-right:0"></div>
<div class="seg" style="left:1157px;top:619px;width:47px;height:20px;background:#4299f7;color:#fff">字符串</div>
<div class="a" style="left:1214px;top:620px">字段</div>
<div class="a" style="left:1262px;top:620px">公式</div>
<div class="f" style="left:1156px;top:644px;width:144px;height:20px"></div>
<div class="a" style="left:1082px;top:675px">数据字典</div>
<div class="f s" style="left:1156px;top:674px;width:122px;height:20px;padding-left:3px">er.impl.SimConf@0]]</div>
<div class="a" style="left:1278px;top:673px;width:22px;height:22px;background:#c4c4c8;text-align:center;line-height:20px;letter-spacing:1px;color:#555">···</div>
<div class="red" style="left:1278px;top:673px;width:22px;height:22px"></div>
<div class="ck" style="top:705px"></div><div class="a" style="left:1100px;top:702px">去除重复项</div>
<div class="a" style="left:1082px;top:730px">水印</div>
<div class="f" style="left:1156px;top:729px;width:144px;height:20px"></div>
<div class="a" style="left:1082px;top:760px">字体大小</div>
<div class="f m" style="left:1156px;top:759px;width:144px;height:20px;line-height:22px">12</div>
<div class="ar" style="left:1280px;top:759px;width:20px;height:20px;background:#cfcfd2"></div>
<div class="sec" style="top:799px">校验</div>
<div class="ck" style="top:830px"></div><div class="a" style="left:1099px;top:827px">允许为空</div>
<div class="ck" style="top:855px"></div><div class="a" style="left:1099px;top:852px">允许直接编辑</div>
<div class="ck" style="top:880px"></div><div class="a" style="left:1099px;top:877px">允许自定义值</div>
<div class="sec" style="top:904px;height:24px;line-height:27px">坐标・尺寸</div>
<div class="a" style="left:1082px;top:938px">组件位置</div>
<div class="f s" style="left:1155px;top:939px;width:56px;height:15px;padding-left:4px;line-height:14px">219</div>
<div class="a" style="left:1211px;top:939px;width:14px;height:15px;background:#d8d8da"></div>
<svg style="left:1214px;top:941px" width="8" height="5"><path d="M0 4l4-3 4 3" fill="none" stroke="#444"/></svg>
<div class="f s" style="left:1230px;top:939px;width:56px;height:15px;padding-left:4px;line-height:14px">14</div>
<div class="a" style="left:1286px;top:939px;width:14px;height:15px;background:#d8d8da"></div>
<svg style="left:1289px;top:941px" width="8" height="5"><path d="M0 4l4-3 4 3" fill="none" stroke="#444"/></svg>

<!-- bottom edge -->
<div class="a" style="left:0;top:952px;width:1314px;height:2px;background:#222;z-index:5"></div>

<!-- annotations -->
<div class="red" style="left:277px;top:130px;width:25px;height:24px"></div>
<div class="red" style="left:412px;top:186px;width:90px;height:28px"></div>
<svg style="left:295px;top:148px;z-index:8" width="150" height="45"><path d="M7 5L135 36" stroke="#ef4048" stroke-width="2"/><path d="M143 39l-13-9-2 9z" fill="#ef4048"/></svg>
<div class="n" style="left:273px;top:96px">1</div>
<div class="n" style="left:444px;top:153px">2</div>
<div class="n" style="left:1087px;top:378px">3</div>
<div class="n" style="left:1273px;top:640px">4</div>
<div class="n" style="left:522px;top:245px">5</div>
<div class="n" style="left:734px;top:771px">6</div>
</body></html>
